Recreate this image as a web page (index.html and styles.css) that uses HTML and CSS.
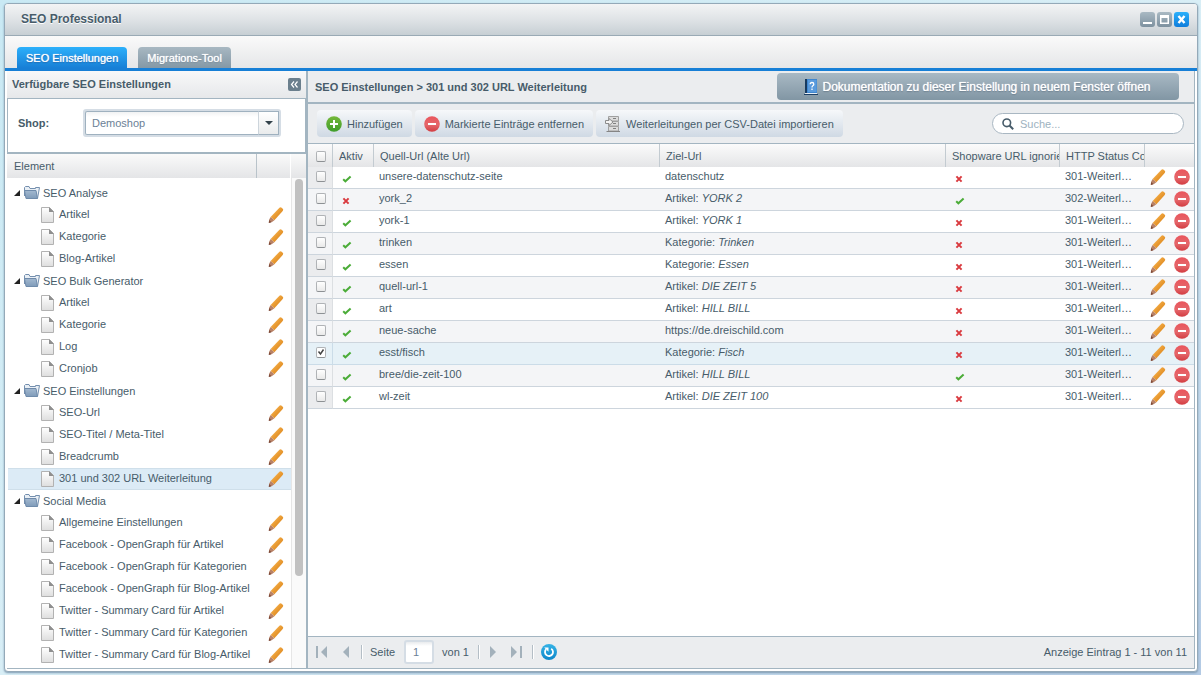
FILE: index.html
```html
<!DOCTYPE html>
<html lang="de">
<head>
<meta charset="utf-8">
<meta name="viewport" content="width=device-width, initial-scale=1">
<title>SEO Professional</title>
<link rel="stylesheet" href="styles.css">
</head>
<body>
<svg class="sprite" aria-hidden="true">
  <defs>
    <linearGradient id="gPencil" x1="0" y1="0" x2="1" y2="1"><stop offset="0.3" stop-color="#f2aa44"/><stop offset="0.7" stop-color="#e08c22"/></linearGradient>
    <linearGradient id="gRed" x1="0" y1="0" x2="0" y2="1"><stop offset="0" stop-color="#e9555c"/><stop offset="0.55" stop-color="#e5676b"/><stop offset="1" stop-color="#d23c41"/></linearGradient>
    <linearGradient id="gGreen" x1="0" y1="0" x2="0" y2="1"><stop offset="0" stop-color="#74b83a"/><stop offset="1" stop-color="#3f9d2b"/></linearGradient>
    <linearGradient id="gFolder" x1="0" y1="0" x2="0" y2="1"><stop offset="0" stop-color="#a3b9d0"/><stop offset="1" stop-color="#7f9bb9"/></linearGradient>
    <linearGradient id="gPage" x1="0" y1="0" x2="0" y2="1"><stop offset="0" stop-color="#ffffff"/><stop offset="1" stop-color="#dedede"/></linearGradient>
    <linearGradient id="gBlue" x1="0" y1="0" x2="0" y2="1"><stop offset="0" stop-color="#35b3e6"/><stop offset="1" stop-color="#0d86c9"/></linearGradient>
  </defs>
  <symbol id="pencil" viewBox="0 0 16 16">
    <path d="M2.600 10 11.200.9Q12.400-.2 13.700.8L14.700 1.700Q15.700 2.800 14.700 4.100L6.400 13.200Z" fill="url(#gPencil)"/>
    <path d="M2.600 10 6.400 13.200 4.400 14.800.8 16 1.200 12.400Z" fill="#b98266"/>
    <path d="M1.100 13 3.500 15.200.8 16Z" fill="#7c4a3a"/>
  </symbol>
  <symbol id="minus" viewBox="0 0 16 16"><circle cx="8" cy="8" r="7.8" fill="url(#gRed)"/><rect x="4" y="7" width="8" height="2" fill="#fff"/></symbol>
  <symbol id="plus" viewBox="0 0 16 16"><circle cx="8" cy="8" r="7.8" fill="url(#gGreen)"/><path d="M7 4h2v3h3v2H9v3H7V9H4V7h3z" fill="#fff"/></symbol>
  <symbol id="check" viewBox="0 0 10 8"><path d="M1.200 4.200 3.400 6.300 8.600 1.600" fill="none" stroke="#4bac38" stroke-width="2"/></symbol>
  <symbol id="cross" viewBox="0 0 8 8"><path d="M1.400 1.400 6.600 6.600M6.600 1.400 1.400 6.600" fill="none" stroke="#d9393e" stroke-width="2"/></symbol>
  <symbol id="page" viewBox="0 0 13 16"><path d="M.5.5h8l4 4v11H.5z" fill="url(#gPage)" stroke="#b2b2b2"/><path d="M8 0 13 5H8z" fill="#8f8f8f"/></symbol>
  <symbol id="folder" viewBox="0 0 16 13">
    <path d="M.5 10V1.500L1.500.5h3.500L6 2.500h5.500v-1h4L13.500 12.500" fill="#e9eff5" stroke="#748fae"/>
    <path d="M.5 4.500h11.500L13.500 12.500H2z" fill="url(#gFolder)" stroke="#6f8bab"/>
  </symbol>
  <symbol id="arrow" viewBox="0 0 6 6"><path d="M6 0v6H0z" fill="#222"/></symbol>
</svg>

<main class="window">
  <header class="titlebar">
    <h1 class="title">SEO Professional</h1>
    <div class="tools">
      <button class="tool" type="button" aria-label="Minimieren"><svg class="i15" viewBox="0 0 15 15"><path d="M3 10h9v2H3z" fill="#fff"/></svg></button>
      <button class="tool" type="button" aria-label="Maximieren"><svg class="i15" viewBox="0 0 15 15"><path d="M3 3h9v9H3zM4.500 6v4.500h6V6z" fill="#fff" fill-rule="evenodd"/></svg></button>
      <button class="tool tool-close" type="button" aria-label="Schließen"><svg class="i15" viewBox="0 0 15 15"><path d="M4.500 4 10.500 11M10.500 4 4.500 11" stroke="#fff" stroke-width="2.400"/></svg></button>
    </div>
  </header>

  <nav class="tabs">
    <button class="tab tab-active" type="button">SEO Einstellungen</button>
    <button class="tab" type="button">Migrations-Tool</button>
  </nav>

  <div class="content">
    <aside class="side">
      <div class="side-head">
        <h2 class="heading">Verfügbare SEO Einstellungen</h2>
        <button class="collapse" type="button" aria-label="Einklappen"><svg class="i13" viewBox="0 0 13 13"><path d="M6 3.500 3.500 6.500 6 9.500M9.500 3.500 7 6.500 9.500 9.500" fill="none" stroke="#fff" stroke-width="1.200"/></svg></button>
      </div>
      <div class="shop">
        <label class="shop-label" for="shop">Shop:</label>
        <div class="combo">
          <select class="combo-field" id="shop"><option>Demoshop</option></select>
          <span class="combo-arrow"><svg class="arrow-down" viewBox="0 0 8 4"><path d="M0 0h8L4 4z" fill="#33424b"/></svg></span>
        </div>
      </div>
      <div class="tree-head"><span class="th-name">Element</span><span class="th-edit"></span><span class="th-rest"></span></div>
      <div class="tree-wrap">
        <ul class="tree">
          <li class="node"><svg class="exp"><use href="#arrow"/></svg><svg class="folder"><use href="#folder"/></svg><span>SEO Analyse</span></li>
          <li class="leaf"><svg class="page"><use href="#page"/></svg><span class="name">Artikel</span><button class="act" type="button" aria-label="Bearbeiten"><svg class="i16"><use href="#pencil"/></svg></button></li>
          <li class="leaf"><svg class="page"><use href="#page"/></svg><span class="name">Kategorie</span><button class="act" type="button" aria-label="Bearbeiten"><svg class="i16"><use href="#pencil"/></svg></button></li>
          <li class="leaf"><svg class="page"><use href="#page"/></svg><span class="name">Blog-Artikel</span><button class="act" type="button" aria-label="Bearbeiten"><svg class="i16"><use href="#pencil"/></svg></button></li>
          <li class="node"><svg class="exp"><use href="#arrow"/></svg><svg class="folder"><use href="#folder"/></svg><span>SEO Bulk Generator</span></li>
          <li class="leaf"><svg class="page"><use href="#page"/></svg><span class="name">Artikel</span><button class="act" type="button" aria-label="Bearbeiten"><svg class="i16"><use href="#pencil"/></svg></button></li>
          <li class="leaf"><svg class="page"><use href="#page"/></svg><span class="name">Kategorie</span><button class="act" type="button" aria-label="Bearbeiten"><svg class="i16"><use href="#pencil"/></svg></button></li>
          <li class="leaf"><svg class="page"><use href="#page"/></svg><span class="name">Log</span><button class="act" type="button" aria-label="Bearbeiten"><svg class="i16"><use href="#pencil"/></svg></button></li>
          <li class="leaf"><svg class="page"><use href="#page"/></svg><span class="name">Cronjob</span><button class="act" type="button" aria-label="Bearbeiten"><svg class="i16"><use href="#pencil"/></svg></button></li>
          <li class="node"><svg class="exp"><use href="#arrow"/></svg><svg class="folder"><use href="#folder"/></svg><span>SEO Einstellungen</span></li>
          <li class="leaf"><svg class="page"><use href="#page"/></svg><span class="name">SEO-Url</span><button class="act" type="button" aria-label="Bearbeiten"><svg class="i16"><use href="#pencil"/></svg></button></li>
          <li class="leaf"><svg class="page"><use href="#page"/></svg><span class="name">SEO-Titel / Meta-Titel</span><button class="act" type="button" aria-label="Bearbeiten"><svg class="i16"><use href="#pencil"/></svg></button></li>
          <li class="leaf"><svg class="page"><use href="#page"/></svg><span class="name">Breadcrumb</span><button class="act" type="button" aria-label="Bearbeiten"><svg class="i16"><use href="#pencil"/></svg></button></li>
          <li class="leaf leaf-selected"><svg class="page"><use href="#page"/></svg><span class="name">301 und 302 URL Weiterleitung</span><button class="act" type="button" aria-label="Bearbeiten"><svg class="i16"><use href="#pencil"/></svg></button></li>
          <li class="node"><svg class="exp"><use href="#arrow"/></svg><svg class="folder"><use href="#folder"/></svg><span>Social Media</span></li>
          <li class="leaf"><svg class="page"><use href="#page"/></svg><span class="name">Allgemeine Einstellungen</span><button class="act" type="button" aria-label="Bearbeiten"><svg class="i16"><use href="#pencil"/></svg></button></li>
          <li class="leaf"><svg class="page"><use href="#page"/></svg><span class="name">Facebook - OpenGraph für Artikel</span><button class="act" type="button" aria-label="Bearbeiten"><svg class="i16"><use href="#pencil"/></svg></button></li>
          <li class="leaf"><svg class="page"><use href="#page"/></svg><span class="name">Facebook - OpenGraph für Kategorien</span><button class="act" type="button" aria-label="Bearbeiten"><svg class="i16"><use href="#pencil"/></svg></button></li>
          <li class="leaf"><svg class="page"><use href="#page"/></svg><span class="name">Facebook - OpenGraph für Blog-Artikel</span><button class="act" type="button" aria-label="Bearbeiten"><svg class="i16"><use href="#pencil"/></svg></button></li>
          <li class="leaf"><svg class="page"><use href="#page"/></svg><span class="name">Twitter - Summary Card für Artikel</span><button class="act" type="button" aria-label="Bearbeiten"><svg class="i16"><use href="#pencil"/></svg></button></li>
          <li class="leaf"><svg class="page"><use href="#page"/></svg><span class="name">Twitter - Summary Card für Kategorien</span><button class="act" type="button" aria-label="Bearbeiten"><svg class="i16"><use href="#pencil"/></svg></button></li>
          <li class="leaf"><svg class="page"><use href="#page"/></svg><span class="name">Twitter - Summary Card für Blog-Artikel</span><button class="act" type="button" aria-label="Bearbeiten"><svg class="i16"><use href="#pencil"/></svg></button></li>
        </ul>
        <div class="scroll"><div class="thumb"></div></div>
      </div>
    </aside>

    <section class="main">
      <div class="main-head">
        <h2 class="heading">SEO Einstellungen &gt; 301 und 302 URL Weiterleitung</h2>
        <button class="docs" type="button">
          <svg class="book" viewBox="0 0 14 17"><path d="M1 1h12v14H1z" fill="#3f86cf"/><path d="M1 1h2v14H1z" fill="#183a5f"/><path d="M4 2h8.500v12H4z" fill="#5a9bdd"/><path d="M1 15h12v1H1z" fill="#e8eef4"/><path d="M0 16h14v1H0z" fill="#1c3f66"/><path d="M6.200 6.200Q6.200 4.500 8 4.500T9.800 6.200Q9.800 7.200 8.800 7.800Q8 8.300 8 9.400M8 10.500v1.500" fill="none" stroke="#fff" stroke-width="1.300"/></svg>
          Dokumentation zu dieser Einstellung in neuem Fenster öffnen
        </button>
      </div>

      <div class="toolbar">
        <button class="btn" type="button"><svg class="i16"><use href="#plus"/></svg>Hinzufügen</button>
        <button class="btn" type="button"><svg class="i16"><use href="#minus"/></svg>Markierte Einträge entfernen</button>
        <button class="btn" type="button">
          <svg class="i16" viewBox="0 0 16 16"><path d="M3.500.5h10v4.500h-10zM3.500 5.500h10V10h-10zM3.500 10.500h10V15h-10z" fill="#dcdcdc" stroke="#a0a0a0"/><path d="M1.500 15.500h13.500" stroke="#858585"/><path d="M8 2.500h3M8 7.500h3M8 12.500h3" stroke="#808080"/><path d="M.5 4.500H4V2.500L8 6 4 9.500V7.500H.5z" fill="#f4f4f4" stroke="#8c8c8c"/></svg>Weiterleitungen per CSV-Datei importieren</button>
        <label class="search"><svg class="lens" viewBox="0 0 12 12"><circle cx="4.800" cy="4.800" r="3.800" fill="none" stroke="#475c6a" stroke-width="1.600"/><path d="M7.500 7.500 11.200 11.200" stroke="#475c6a" stroke-width="2"/></svg><input class="search-field" type="text" placeholder="Suche..." aria-label="Suche"></label>
      </div>

      <div class="grid">
        <table class="table">
          <colgroup><col class="c-sel"><col class="c-act"><col><col><col class="c-ign"><col class="c-code"><col class="c-tools"></colgroup>
          <thead>
            <tr><th class="sel"><input class="cb" type="checkbox" aria-label="Alle auswählen"></th><th><div class="clip">Aktiv</div></th><th><div class="clip">Quell-Url (Alte Url)</div></th><th><div class="clip">Ziel-Url</div></th><th><div class="clip">Shopware URL ignorieren</div></th><th><div class="clip">HTTP Status Code</div></th><th></th></tr>
          </thead>
          <tbody>
            <tr><td class="sel"><input class="cb" type="checkbox" aria-label="Auswählen"></td><td class="flag"><svg class="check"><use href="#check"/></svg></td><td>unsere-datenschutz-seite</td><td>datenschutz</td><td class="flag"><svg class="cross"><use href="#cross"/></svg></td><td>301-Weiterl…</td><td class="acts"><button class="act" type="button" aria-label="Bearbeiten"><svg class="i16"><use href="#pencil"/></svg></button><button class="act" type="button" aria-label="Löschen"><svg class="i16"><use href="#minus"/></svg></button></td></tr>
            <tr><td class="sel"><input class="cb" type="checkbox" aria-label="Auswählen"></td><td class="flag"><svg class="cross"><use href="#cross"/></svg></td><td>york_2</td><td>Artikel: <i>YORK 2</i></td><td class="flag"><svg class="check"><use href="#check"/></svg></td><td>302-Weiterl…</td><td class="acts"><button class="act" type="button" aria-label="Bearbeiten"><svg class="i16"><use href="#pencil"/></svg></button><button class="act" type="button" aria-label="Löschen"><svg class="i16"><use href="#minus"/></svg></button></td></tr>
            <tr><td class="sel"><input class="cb" type="checkbox" aria-label="Auswählen"></td><td class="flag"><svg class="check"><use href="#check"/></svg></td><td>york-1</td><td>Artikel: <i>YORK 1</i></td><td class="flag"><svg class="cross"><use href="#cross"/></svg></td><td>301-Weiterl…</td><td class="acts"><button class="act" type="button" aria-label="Bearbeiten"><svg class="i16"><use href="#pencil"/></svg></button><button class="act" type="button" aria-label="Löschen"><svg class="i16"><use href="#minus"/></svg></button></td></tr>
            <tr><td class="sel"><input class="cb" type="checkbox" aria-label="Auswählen"></td><td class="flag"><svg class="check"><use href="#check"/></svg></td><td>trinken</td><td>Kategorie: <i>Trinken</i></td><td class="flag"><svg class="cross"><use href="#cross"/></svg></td><td>301-Weiterl…</td><td class="acts"><button class="act" type="button" aria-label="Bearbeiten"><svg class="i16"><use href="#pencil"/></svg></button><button class="act" type="button" aria-label="Löschen"><svg class="i16"><use href="#minus"/></svg></button></td></tr>
            <tr><td class="sel"><input class="cb" type="checkbox" aria-label="Auswählen"></td><td class="flag"><svg class="check"><use href="#check"/></svg></td><td>essen</td><td>Kategorie: <i>Essen</i></td><td class="flag"><svg class="cross"><use href="#cross"/></svg></td><td>301-Weiterl…</td><td class="acts"><button class="act" type="button" aria-label="Bearbeiten"><svg class="i16"><use href="#pencil"/></svg></button><button class="act" type="button" aria-label="Löschen"><svg class="i16"><use href="#minus"/></svg></button></td></tr>
            <tr><td class="sel"><input class="cb" type="checkbox" aria-label="Auswählen"></td><td class="flag"><svg class="check"><use href="#check"/></svg></td><td>quell-url-1</td><td>Artikel: <i>DIE ZEIT 5</i></td><td class="flag"><svg class="cross"><use href="#cross"/></svg></td><td>301-Weiterl…</td><td class="acts"><button class="act" type="button" aria-label="Bearbeiten"><svg class="i16"><use href="#pencil"/></svg></button><button class="act" type="button" aria-label="Löschen"><svg class="i16"><use href="#minus"/></svg></button></td></tr>
            <tr><td class="sel"><input class="cb" type="checkbox" aria-label="Auswählen"></td><td class="flag"><svg class="check"><use href="#check"/></svg></td><td>art</td><td>Artikel: <i>HILL BILL</i></td><td class="flag"><svg class="cross"><use href="#cross"/></svg></td><td>301-Weiterl…</td><td class="acts"><button class="act" type="button" aria-label="Bearbeiten"><svg class="i16"><use href="#pencil"/></svg></button><button class="act" type="button" aria-label="Löschen"><svg class="i16"><use href="#minus"/></svg></button></td></tr>
            <tr><td class="sel"><input class="cb" type="checkbox" aria-label="Auswählen"></td><td class="flag"><svg class="check"><use href="#check"/></svg></td><td>neue-sache</td><td>https://de.dreischild.com</td><td class="flag"><svg class="cross"><use href="#cross"/></svg></td><td>301-Weiterl…</td><td class="acts"><button class="act" type="button" aria-label="Bearbeiten"><svg class="i16"><use href="#pencil"/></svg></button><button class="act" type="button" aria-label="Löschen"><svg class="i16"><use href="#minus"/></svg></button></td></tr>
            <tr class="row-selected"><td class="sel"><input class="cb" type="checkbox" checked aria-label="Auswählen"></td><td class="flag"><svg class="check"><use href="#check"/></svg></td><td>esst/fisch</td><td>Kategorie: <i>Fisch</i></td><td class="flag"><svg class="cross"><use href="#cross"/></svg></td><td>301-Weiterl…</td><td class="acts"><button class="act" type="button" aria-label="Bearbeiten"><svg class="i16"><use href="#pencil"/></svg></button><button class="act" type="button" aria-label="Löschen"><svg class="i16"><use href="#minus"/></svg></button></td></tr>
            <tr><td class="sel"><input class="cb" type="checkbox" aria-label="Auswählen"></td><td class="flag"><svg class="check"><use href="#check"/></svg></td><td>bree/die-zeit-100</td><td>Artikel: <i>HILL BILL</i></td><td class="flag"><svg class="check"><use href="#check"/></svg></td><td>301-Weiterl…</td><td class="acts"><button class="act" type="button" aria-label="Bearbeiten"><svg class="i16"><use href="#pencil"/></svg></button><button class="act" type="button" aria-label="Löschen"><svg class="i16"><use href="#minus"/></svg></button></td></tr>
            <tr><td class="sel"><input class="cb" type="checkbox" aria-label="Auswählen"></td><td class="flag"><svg class="check"><use href="#check"/></svg></td><td>wl-zeit</td><td>Artikel: <i>DIE ZEIT 100</i></td><td class="flag"><svg class="cross"><use href="#cross"/></svg></td><td>301-Weiterl…</td><td class="acts"><button class="act" type="button" aria-label="Bearbeiten"><svg class="i16"><use href="#pencil"/></svg></button><button class="act" type="button" aria-label="Löschen"><svg class="i16"><use href="#minus"/></svg></button></td></tr>
          </tbody>
        </table>
      </div>

      <footer class="pager">
        <button class="pg" type="button" aria-label="Erste Seite"><svg class="i12" viewBox="0 0 12 12"><path d="M0 0h2v12H0zM11 0v12L5 6z" fill="#a3b1bb"/></svg></button>
        <button class="pg" type="button" aria-label="Vorige Seite"><svg class="i12" viewBox="0 0 12 12"><path d="M9 0v12L3 6z" fill="#a3b1bb"/></svg></button>
        <span class="sep"></span>
        <label class="pg-label" for="pageno">Seite</label>
        <input class="pg-field" id="pageno" type="text" value="1">
        <span>von 1</span>
        <span class="sep"></span>
        <button class="pg" type="button" aria-label="Nächste Seite"><svg class="i12" viewBox="0 0 12 12"><path d="M3 0v12L9 6z" fill="#a3b1bb"/></svg></button>
        <button class="pg" type="button" aria-label="Letzte Seite"><svg class="i12" viewBox="0 0 12 12"><path d="M0 0v12L6 6zM9 0h2v12H9z" fill="#a3b1bb"/></svg></button>
        <span class="sep"></span>
        <button class="pg" type="button" aria-label="Aktualisieren"><svg class="i16" viewBox="0 0 16 16"><circle cx="8" cy="8" r="8" fill="url(#gBlue)"/><path d="M10.200 4.700A4 4 0 1 1 5 5.400" fill="none" stroke="#fff" stroke-width="1.800"/><path d="M3.200 3.500H7.500V7.800z" fill="#fff"/></svg></button>
        <span class="status">Anzeige Eintrag 1 - 11 von 11</span>
      </footer>
    </section>
  </div>
</main>
</body>
</html>
```
FILE: styles.css
```css
* { box-sizing: border-box; }

body {
  margin: 0;
  height: 100vh;
  padding: 3px 3px 3px 4px;
  background: linear-gradient(to bottom right, #c9e9f4, #d8eef6 50%, #b3cae4);
  font: 11px/14px "Liberation Sans", Arial, sans-serif;
  color: #475c6a;
}

button, input, select { font: inherit; color: inherit; margin: 0; }
button { padding: 0; border: 0; background: none; cursor: pointer; }
svg { display: block; flex: none; }
.sprite { position: absolute; width: 0; height: 0; }

.i12 { width: 12px; height: 12px; }
.i13 { width: 13px; height: 13px; }
.i15 { width: 15px; height: 15px; }
.i16 { width: 16px; height: 16px; }

.window {
  display: flex;
  flex-direction: column;
  height: 100%;
  border: 1px solid #94a9b8;
  border-radius: 4px;
  background: #fff;
  overflow: hidden;
  box-shadow: 0 1px 2px #7f9bb3;
}

/* title bar */
.titlebar {
  display: flex;
  align-items: center;
  justify-content: space-between;
  height: 32px;
  padding: 0 8px 1px 16px;
  border-bottom: 1px solid #9aaab5;
  background: linear-gradient(#f3f4f5, #dfe3e6 50%, #c7cfd4);
}
.title { margin: 0; font-size: 12px; line-height: 14px; text-shadow: 0 1px 0 #fff; }
.tools { display: flex; gap: 2px; }
.tool { border-radius: 3px; background: linear-gradient(#a9b9c3, #7d919f); }
.tool-close { background: linear-gradient(#2bb0fb, #0f7ddb); }

/* tabs */
.tabs {
  display: flex;
  align-items: flex-end;
  gap: 11px;
  height: 35px;
  padding-left: 12px;
  border-bottom: 3px solid #177fd6;
  background: linear-gradient(#fafafa, #e5e6e8);
}
.tab {
  height: 21px;
  padding: 0 9px;
  border-radius: 4px 4px 0 0;
  background: linear-gradient(#a8b8c2, #8498a6);
  color: #fff;
  text-shadow: 0 0 1px #fff, 0 1px 1px #6c8190;
}
.tab-active { background: linear-gradient(#2cb0fb, #177fd6); text-shadow: 0 0 1px #fff, 0 1px 1px #0c5ca8; }

.content { display: flex; flex: 1; min-height: 0; padding: 0 2px 2px; }

/* settings tree */
.side {
  display: flex;
  flex-direction: column;
  width: 299px;
  border-bottom: 1px solid #a3b5c1;
}
.side-head {
  display: flex;
  align-items: center;
  justify-content: space-between;
  height: 27px;
  padding: 0 5px 1px;
  background: linear-gradient(#f8f8f9, #e6e8ea);
}
.heading { margin: 0; font-size: 11px; line-height: 14px; }
.collapse { border-radius: 2px; background: #6b7f8d; }
.shop {
  display: flex;
  align-items: center;
  height: 56px;
  padding-left: 10px;
  padding-bottom: 5px;
  border: 1px solid #a3b5c1;
  border-bottom-width: 2px;
  background: #fff;
}
.shop-label { width: 65px; font-weight: bold; }
.combo {
  display: flex;
  width: 198px;
  height: 28px;
  border: 2px solid #d5dde5;
  border-radius: 3px;
  background: #fff;
}
.combo-field {
  flex: 1;
  min-width: 0;
  padding: 0 6px;
  border: 1px solid #9fb1bf;
  border-right: 0;
  border-radius: 2px 0 0 2px;
  appearance: none;
  background: linear-gradient(#f1f2f3, #fff 5px);
  color: #6b8196;
}
.combo-arrow {
  display: flex;
  align-items: center;
  justify-content: center;
  width: 21px;
  border: 1px solid #9fb1bf;
  border-left-color: #cdd5dc;
  background: linear-gradient(#fff, #e9ebec);
}
.arrow-down { width: 8px; height: 4px; }
.tree-head {
  display: flex;
  height: 24px;
  line-height: 24px;
  background: linear-gradient(#fafafa, #e4e5e7);
}
.th-name { flex: 1; padding-left: 7px; border-right: 1px solid #b9c3ca; }
.th-edit { width: 34px; border-right: 1px solid #fff; }
.th-rest { width: 15px; }
.tree-wrap { display: flex; flex: 1; min-height: 0; padding-left: 1px; overflow: hidden; }
.tree { flex: 1; min-width: 0; margin: 0; padding: 4px 0 0; list-style: none; }
.node, .leaf { display: flex; align-items: center; height: 22px; white-space: nowrap; }
.node { padding: 0 0 1px 6px; }
.leaf { padding: 0 7px 0 33px; border: solid transparent; border-width: 1px 0; }
.leaf-selected { border-color: #cfdfea; background: #dcebf6; }
.exp { width: 6px; height: 6px; margin-right: 4px; }
.folder { width: 16px; height: 13px; margin-right: 3px; }
.page { width: 13px; height: 16px; margin-right: 5px; }
.name { flex: 1; padding-bottom: 2px; }
.scroll { width: 15px; padding: 1px 3px 0; border-left: 1px solid #e6e6e6; background: #fafafa; }
.thumb { height: 397px; border-radius: 4px; background: #c1c1c1; }

/* redirects panel */
.main {
  display: flex;
  flex: 1;
  flex-direction: column;
  min-width: 0;
  border: solid #a3b5c1;
  border-width: 0 1px 1px 2px;
  background: #ebedef;
}
.main-head {
  display: flex;
  align-items: center;
  justify-content: space-between;
  height: 33px;
  padding: 0 15px 0 7px;
  border-bottom: 2px solid #a3b5c1;
}
.docs {
  display: flex;
  align-items: center;
  justify-content: center;
  gap: 5px;
  width: 402px;
  height: 27px;
  padding-right: 2px;
  border-radius: 4px;
  background: linear-gradient(#a9b9c4, #8196a4);
  color: #fff;
  font-size: 12px;
  text-shadow: 0 0 1px #fff, 0 1px 1px #5f7484;
}
.book { width: 14px; height: 17px; }
.toolbar {
  display: flex;
  align-items: center;
  gap: 3px;
  height: 40px;
  padding: 0 10px 0 9px;
  border-bottom: 1px solid #a3b5c1;
}
.btn {
  display: flex;
  align-items: center;
  gap: 5px;
  height: 27px;
  padding: 0 9px;
  border-radius: 4px;
  background: linear-gradient(#f6f8fa, #cfd9e4);
}
.search {
  display: flex;
  align-items: center;
  gap: 6px;
  width: 192px;
  height: 21px;
  margin-left: auto;
  padding: 0 9px;
  border: 1px solid #a9b7c2;
  border-radius: 11px;
  background: #fff;
}
.lens { width: 12px; height: 12px; }
.search-field { flex: 1; min-width: 0; padding: 0; border: 0; outline: 0; background: none; }
.search-field::placeholder { color: #9db2c0; opacity: 1; }

.grid { flex: 1; min-height: 0; overflow: hidden; background: #fff; }
.table { width: 100%; border-collapse: separate; border-spacing: 0; table-layout: fixed; }
.c-sel { width: 25px; }
.c-act { width: 41px; }
.c-ign { width: 114px; }
.c-code { width: 85px; }
.c-tools { width: 49px; }
.table th {
  height: 23px;
  padding: 0 0 0 6px;
  border-right: 1px solid #c3cbd1;
  background: linear-gradient(#fbfbfb, #e4e5e7);
  font-weight: normal;
  text-align: left;
  white-space: nowrap;
}
.clip { overflow: hidden; }
.table th:last-child { border-right: 0; }
.table td {
  height: 22px;
  padding: 0 0 3px 5px;
  border-bottom: 1px solid #cdd5dd;
  background: #fff;
  white-space: nowrap;
  overflow: hidden;
}
.table tbody tr:nth-child(even) td { background: #f4f5f7; }
.table tbody .row-selected td { border-color: #cbdce8; background: #e6f1f7; }
.table .sel { padding: 0 0 1px 8px; border-right: 1px solid #dcdfe2; }
.table th.sel { padding: 2px 0 0 8px; border-color: #c3cbd1; }
.table tbody tr .sel { padding-bottom: 3px; background: #ebecee; }
.table tbody .row-selected .sel { background: #e6f1f7; }
.table .flag { padding: 2px 0 0 9px; }
.table .acts { padding: 0 0 1px 5px; font-size: 0; line-height: 0; }
.acts .act + .act { margin-left: 8px; }
.act { display: inline-block; }
.check { width: 10px; height: 8px; }
.cross { width: 8px; height: 8px; }

.cb {
  display: block;
  width: 10px;
  height: 11px;
  border: 1px solid #b0b3b6;
  border-bottom-color: #8d9194;
  border-radius: 2px;
  appearance: none;
  background: linear-gradient(#fff, #e9e9e9);
}
.cb:checked {
  background: #fff url("data:image/svg+xml,%3Csvg xmlns='http://www.w3.org/2000/svg' viewBox='0 0 8 8'%3E%3Cpath d='M1.500 3.500 3.500 6 6.500 1.500' fill='none' stroke='%23444' stroke-width='1.500'/%3E%3C/svg%3E");
}

/* paging bar */
.pager {
  display: flex;
  align-items: center;
  height: 32px;
  padding: 0 7px 1px 8px;
  border-top: 1px solid #a3b5c1;
}
.pg + .pg { margin-left: 12px; }
.sep { width: 2px; height: 14px; margin: 0 7px 0 9px; border-left: 1px solid #b4bec6; border-right: 1px solid #fff; }
.pg-label { margin-right: 9px; }
.pg-field {
  width: 30px;
  height: 24px;
  margin-right: 8px;
  padding: 0 7px;
  border: 2px solid #d5dde5;
  border-radius: 3px;
  background: linear-gradient(#e9ebed, #fff 4px);
  color: #6b8196;
}
.status { margin-left: auto; }
```
